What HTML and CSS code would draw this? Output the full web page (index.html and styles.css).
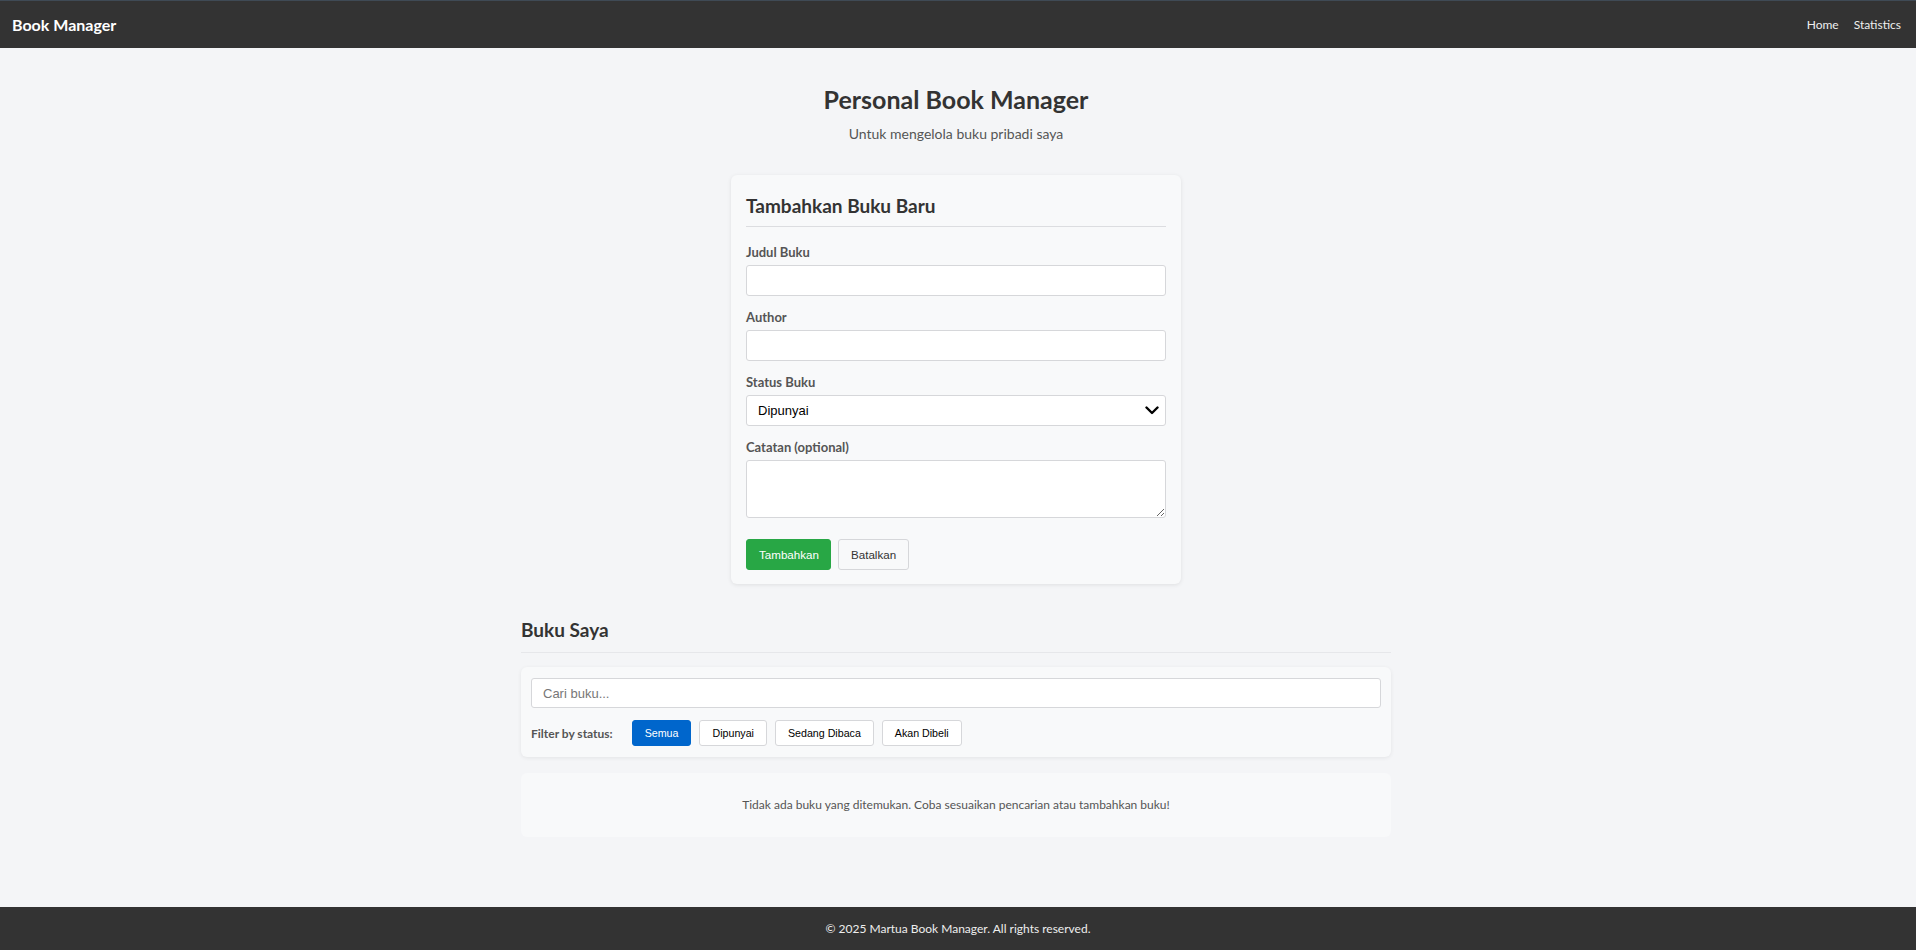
FILE: index.html
```html
<!DOCTYPE html>
<html lang="id">
<head>
<meta charset="utf-8">
<title>Personal Book Manager</title>
<link rel="stylesheet" href="styles.css">
</head>
<body>
<nav class="navbar">
  <a class="brand" href="#">Book Manager</a>
  <div class="nav-links">
    <a href="#">Home</a>
    <a href="#">Statistics</a>
  </div>
</nav>
<main class="container">
  <header class="page-header">
    <h1>Personal Book Manager</h1>
    <p class="subtitle">Untuk mengelola buku pribadi saya</p>
  </header>

  <section class="form-card">
    <h2 class="card-title">Tambahkan Buku Baru</h2>
    <form class="book-form">
      <div class="form-group">
        <label for="title">Judul Buku</label>
        <input id="title" type="text" class="field">
      </div>
      <div class="form-group">
        <label for="author">Author</label>
        <input id="author" type="text" class="field">
      </div>
      <div class="form-group">
        <label for="status">Status Buku</label>
        <div class="select-wrap">
          <select id="status" class="field select">
            <option>Dipunyai</option>
            <option>Sedang Dibaca</option>
            <option>Akan Dibeli</option>
          </select>
          <svg class="chevron" width="14" height="9" viewBox="0 0 14 9" aria-hidden="true">
            <path d="M1.5 1.5 L7 7 L12.5 1.5" fill="none" stroke="#000" stroke-width="2.4" stroke-linecap="round" stroke-linejoin="round"/>
          </svg>
        </div>
      </div>
      <div class="form-group">
        <label for="notes">Catatan (optional)</label>
        <textarea id="notes" class="field textarea"></textarea>
      </div>
      <div class="form-actions">
        <button type="button" class="btn btn-success">Tambahkan</button>
        <button type="button" class="btn btn-light">Batalkan</button>
      </div>
    </form>
  </section>

  <section class="books">
    <h2 class="section-title">Buku Saya</h2>
    <div class="filter-card">
      <input type="text" class="field search" placeholder="Cari buku...">
      <div class="filter-row">
        <span class="filter-label">Filter by status:</span>
        <button type="button" class="chip active">Semua</button>
        <button type="button" class="chip">Dipunyai</button>
        <button type="button" class="chip">Sedang Dibaca</button>
        <button type="button" class="chip">Akan Dibeli</button>
      </div>
    </div>
    <div class="empty-card">Tidak ada buku yang ditemukan. Coba sesuaikan pencarian atau tambahkan buku!</div>
  </section>
</main>
<footer class="footer">© 2025 Martua Book Manager. All rights reserved.</footer>
</body>
</html>
```

FILE: styles.css
```css
* { box-sizing: border-box; }

html, body { height: 100%; }

body {
  margin: 0;
  min-height: 100vh;
  display: flex;
  flex-direction: column;
  background: #f4f5f7;
  color: #333;
  font-family: Lato, "Noto Sans", sans-serif;
  font-size: 13px;
}

.navbar {
  height: 48px;
  background: #333;
  border-top: 1px solid #3f4a55;
  display: flex;
  align-items: center;
  justify-content: space-between;
  padding: 0 15px 0 12px;
  flex-shrink: 0;
}

.brand {
  color: #fff;
  font-weight: 700;
  font-size: 16px;
  text-decoration: none;
}

.nav-links {
  display: flex;
  gap: 15px;
}

.nav-links a {
  color: #eee;
  text-decoration: none;
  font-size: 12px;
}

.container {
  flex: 1;
  width: 870px;
  margin-left: calc(50% - 437px);
  padding-bottom: 60px;
}

.page-header {
  text-align: center;
  padding-top: 36px;
}

.page-header h1 {
  margin: 0;
  font-size: 25px;
  line-height: 30px;
  font-weight: 700;
  color: #333;
}

.subtitle {
  margin: 10px 0 0;
  font-size: 14px;
  line-height: 20px;
  color: #555;
}

.form-card {
  width: 450px;
  margin: 31px auto 0;
  background: #f8f9fa;
  border-radius: 6px;
  box-shadow: 0 1px 4px rgba(0, 0, 0, 0.09);
  padding: 19px 15px 14px;
}

.card-title {
  margin: 0;
  font-size: 19px;
  line-height: 24px;
  font-weight: 700;
  padding-bottom: 8px;
  border-bottom: 1px solid #dcdde0;
}

.book-form {
  padding-top: 16px;
}

.form-group {
  margin-bottom: 12px;
  display: flex;
  flex-direction: column;
}

.form-group label {
  font-size: 13px;
  line-height: 18px;
  color: #555;
  font-weight: 700;
  margin-bottom: 4px;
}

.field {
  width: 100%;
  height: 31px;
  border: 1px solid #d6d7da;
  border-radius: 3px;
  background: #fff;
  font-family: "Liberation Sans", Arial, sans-serif;
  font-size: 13px;
  padding: 0 10px;
  color: #000;
}

.select-wrap {
  position: relative;
}

.select {
  appearance: none;
  -webkit-appearance: none;
  padding: 0 30px 0 11px;
}

.chevron {
  position: absolute;
  right: 7px;
  top: 11px;
  pointer-events: none;
}

.textarea {
  height: 58px;
  resize: vertical;
  padding: 6px 10px;
}

.form-actions {
  display: flex;
  gap: 7px;
  margin-top: 21px;
}

.btn {
  height: 31px;
  border-radius: 3px;
  font-family: "Liberation Sans", Arial, sans-serif;
  font-size: 11.6px;
  padding: 0 12px;
  cursor: pointer;
}

.btn-success {
  width: 85px;
  background: #28a745;
  border: 1px solid #28a745;
  color: #fff;
}

.btn-light {
  width: 71px;
  background: #f8f9fa;
  border: 1px solid #d6d7da;
  color: #333;
}

.books {
  margin-top: 34px;
}

.section-title {
  margin: 0;
  font-size: 19px;
  line-height: 24px;
  font-weight: 700;
  padding-bottom: 10px;
  border-bottom: 1px solid #e6e7ea;
}

.filter-card {
  margin-top: 14px;
  background: #f8f9fa;
  border-radius: 6px;
  box-shadow: 0 1px 4px rgba(0, 0, 0, 0.07);
  padding: 11px 10px 11px;
}

.search {
  height: 30px;
  padding: 0 11px;
}

.search::placeholder {
  color: #777;
}

.filter-row {
  display: flex;
  align-items: center;
  gap: 8px;
  margin-top: 12px;
}

.filter-label {
  font-size: 12px;
  color: #555;
  font-weight: 700;
  margin-right: 11px;
}

.chip {
  height: 26px;
  padding: 0 12px;
  border: 1px solid #d6d7da;
  border-radius: 3px;
  background: #fff;
  color: #000;
  font-family: "Liberation Sans", Arial, sans-serif;
  font-size: 10.67px;
  cursor: pointer;
}

.chip.active {
  background: #0066cc;
  border-color: #0066cc;
  color: #fff;
}

.empty-card {
  margin-top: 16px;
  background: #f8f9fa;
  border-radius: 6px;
  padding: 23px 10px;
  line-height: 18px;
  text-align: center;
  color: #555;
  font-size: 12px;
}

.footer {
  height: 43px;
  background: #333;
  color: #eee;
  display: flex;
  align-items: center;
  justify-content: center;
  font-size: 12px;
  flex-shrink: 0;
}
```
